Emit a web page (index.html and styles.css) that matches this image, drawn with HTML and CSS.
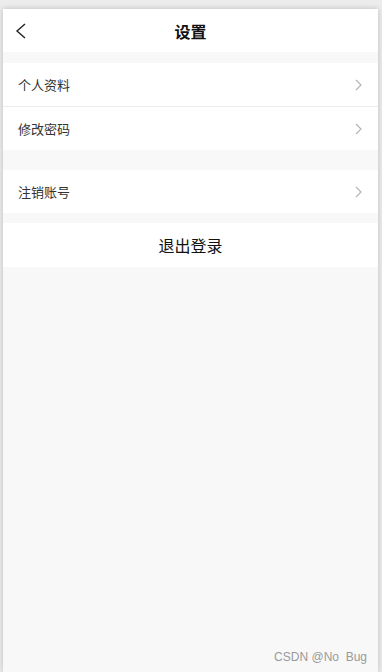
FILE: index.html
```html
<!DOCTYPE html>
<html lang="zh-CN">
<head>
    <meta charset="UTF-8">
    <meta name="viewport" content="width=device-width, initial-scale=1.0">
    <title>设置</title>
    <link rel="stylesheet" href="styles.css">
</head>
<body>
    <div class="app">
        <div class="header">
            <span class="back">
                <svg width="12" height="16" viewBox="0 0 12 16"><path d="M10 1 L2 8 L10 15" fill="none" stroke="#222" stroke-width="1.4"/></svg>
            </span>
            <h1>设置</h1>
        </div>

        <div class="group">
            <div class="item">
                <span>个人资料</span>
                <svg class="arrow" width="7" height="12" viewBox="0 0 7 12"><path d="M1 1 L6 6 L1 11" fill="none" stroke="#b5b5b5" stroke-width="1.2"/></svg>
            </div>
            <div class="item">
                <span>修改密码</span>
                <svg class="arrow" width="7" height="12" viewBox="0 0 7 12"><path d="M1 1 L6 6 L1 11" fill="none" stroke="#b5b5b5" stroke-width="1.2"/></svg>
            </div>
        </div>

        <div class="group group-far">
            <div class="item">
                <span>注销账号</span>
                <svg class="arrow" width="7" height="12" viewBox="0 0 7 12"><path d="M1 1 L6 6 L1 11" fill="none" stroke="#b5b5b5" stroke-width="1.2"/></svg>
            </div>
        </div>

        <div class="logout">退出登录</div>

        <div class="mark">CSDN @No&nbsp; Bug</div>
    </div>
</body>
</html>
```
FILE: styles.css
```css
html, body {
    height: 100%;
}

body {
    margin: 0;
    padding: 9px 4px 0 3px;
    box-sizing: border-box;
    background-color: #ececec;
    font-family: "Noto Sans CJK SC", "Noto Sans", sans-serif;
}

.app {
    height: 100%;
    background-color: #f8f8f8;
    box-shadow: 0 0 6px rgba(0, 0, 0, 0.2);
    display: flex;
    flex-direction: column;
}

.header {
    height: 43px;
    background-color: #fff;
    display: flex;
    align-items: center;
    justify-content: center;
    position: relative;
}

.header h1 {
    margin: 0;
    font-size: 16px;
    font-weight: bold;
    color: #111;
}

.back {
    position: absolute;
    left: 12px;
    top: 14px;
    display: flex;
}

.group {
    margin-top: 11px;
    background-color: #fff;
}

.group-far {
    margin-top: 20px;
}

.item {
    height: 43px;
    padding: 0 16px 0 15px;
    display: flex;
    align-items: center;
    justify-content: space-between;
    font-size: 13px;
    color: #333;
}

.item + .item {
    border-top: 1px solid #ececec;
}

.logout {
    margin-top: 10px;
    height: 44px;
    background-color: #fff;
    display: flex;
    align-items: center;
    justify-content: center;
    font-size: 16px;
    color: #111;
}

.mark {
    margin-top: auto;
    padding: 0 11px 8px 0;
    text-align: right;
    font-family: "Liberation Sans", Arial, sans-serif;
    font-size: 12px;
    color: #9a9a9a;
}
```
